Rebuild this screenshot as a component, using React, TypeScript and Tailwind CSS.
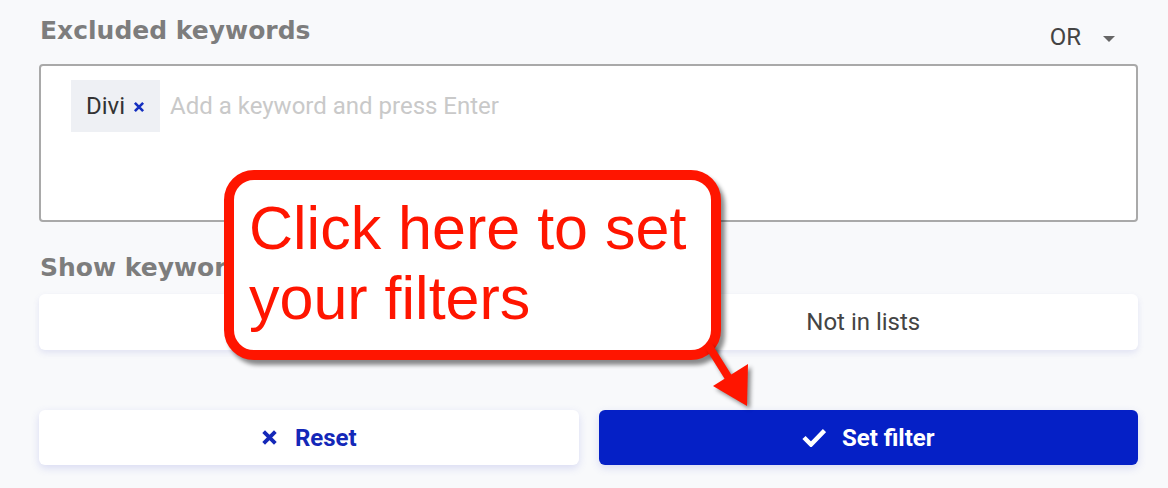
const heading = "font-['DejaVu_Sans',sans-serif] text-[25px] font-bold text-[#7d7d7d]";

function XIcon({ size, stroke }: { size: number; stroke: number }) {
  return (
    <svg width={size} height={size} viewBox="0 0 16 16" fill="none" stroke="currentColor" strokeWidth={stroke}>
      <path d="M2.5 2.5 13.5 13.5M13.5 2.5 2.5 13.5" />
    </svg>
  );
}

function CheckIcon() {
  return (
    <svg width="24" height="19" viewBox="0 0 24 19" fill="none" stroke="currentColor" strokeWidth="4.5">
      <path d="M2 9.5 9 16.5 22.5 2.5" />
    </svg>
  );
}

function Callout() {
  return (
    <>
      <div className="absolute left-[224px] top-[170px] h-[190px] w-[497px] rounded-[30px] border-[10px] border-[#ff1500] bg-white pl-[15px] pt-[13px] shadow-[4px_5px_4px_rgba(0,0,0,0.45)]">
        <p className="font-['Liberation_Sans',Arial,sans-serif] text-[61px] leading-[70px] text-[#ff1500]">
          Click here to set
          <br />
          your filters
        </p>
      </div>
      <svg
        className="absolute left-[690px] top-[335px] drop-shadow-[3px_3px_2px_rgba(0,0,0,0.45)]"
        width="70"
        height="80"
        viewBox="690 335 70 80"
      >
        <line x1="710" y1="348" x2="735" y2="388" stroke="#ff1500" strokeWidth="8" strokeLinecap="round" />
        <polygon points="713,386 748,364 747,406" fill="#ff1500" />
      </svg>
    </>
  );
}

export default function App() {
  return (
    <div className="relative h-[488px] w-full overflow-hidden bg-[#f8f9fb] pl-[39px] pr-[30px] font-['Roboto',sans-serif]">
      <div className="flex h-[47px] items-start justify-between pt-[15px]">
        <h2 className={`${heading} pl-px leading-[32px]`}>Excluded keywords</h2>
        <div className="mr-[23px] mt-[4px] flex items-center gap-[22px] text-[24px] leading-[36px] text-[#444]">
          <span>OR</span>
          <span className="mt-[3px] h-0 w-0 border-x-[6px] border-t-[6px] border-x-transparent border-t-[#666]" />
        </div>
      </div>

      <div className="mt-[17px] h-[158px] rounded-[4px] border-2 border-[#a9a9a9] bg-white px-[30px] pt-[14px]">
        <div className="flex items-center gap-[10px]">
          <span className="flex h-[52px] items-center gap-[8px] bg-[#eef0f4] pl-[15px] pr-[15px] text-[24px] text-[#333]">
            Divi
            <span className="mt-[2px] text-[#1530c0]">
              <XIcon size={12} stroke={3.5} />
            </span>
          </span>
          <span className="text-[24px] text-[#c9c9c9]">Add a keyword and press Enter</span>
        </div>
      </div>

      <h2 className={`${heading} mt-[30px] pl-px leading-[32px]`}>Show keywords in lists</h2>

      <div className="mt-[10px] flex h-[56px] rounded-[6px] bg-white text-[24px] text-[#444] shadow-[0_3px_6px_rgba(90,100,200,0.14)]">
        <button className="flex flex-1 items-center justify-center">In lists</button>
        <button className="flex flex-1 items-center justify-center">Not in lists</button>
      </div>

      <div className="mt-[60px] flex gap-[20px]">
        <button className="flex h-[55px] flex-1 items-center justify-center gap-[17px] rounded-[6px] bg-white text-[24px] font-bold text-[#1428b8] shadow-[0_3px_8px_rgba(90,100,210,0.2)]">
          <XIcon size={17} stroke={3.6} />
          Reset
        </button>
        <button className="flex h-[55px] flex-1 items-center justify-center gap-[16px] rounded-[6px] bg-[#0520c6] text-[24px] font-bold text-white shadow-[0_3px_8px_rgba(90,100,210,0.2)]">
          <CheckIcon />
          Set filter
        </button>
      </div>

      <Callout />
    </div>
  );
}
